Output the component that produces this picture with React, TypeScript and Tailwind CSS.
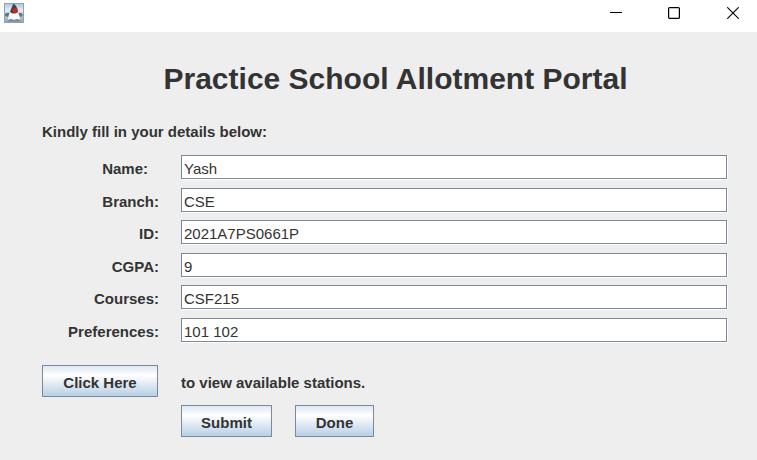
const fields = [
  { id: 'name', label: 'Name:', value: 'Yash', inset: 'pr-[11px]' },
  { id: 'branch', label: 'Branch:', value: 'CSE', inset: '' },
  { id: 'student-id', label: 'ID:', value: '2021A7PS0661P', inset: '' },
  { id: 'cgpa', label: 'CGPA:', value: '9', inset: '' },
  { id: 'courses', label: 'Courses:', value: 'CSF215', inset: '' },
  { id: 'preferences', label: 'Preferences:', value: '101 102', inset: '' },
];

const buttonStyle =
  'h-8 border border-[#7a8a99] bg-linear-to-b from-[#dde8f3] via-white via-30% to-[#b8cfe5] pt-1 text-center text-[15px] leading-5 font-bold';

function DukeIcon() {
  return (
    <svg width="20" height="20" viewBox="0 0 20 20" aria-hidden="true">
      <defs>
        <linearGradient id="tile" x1="0" y1="0" x2="0" y2="1">
          <stop offset="0" stopColor="#b5c8da" />
          <stop offset="0.35" stopColor="#e3ecf3" />
          <stop offset="1" stopColor="#8fa5ba" />
        </linearGradient>
      </defs>
      <rect width="20" height="20" fill="#8da3b8" />
      <rect x="1" y="1" width="18" height="18" fill="url(#tile)" />
      <path d="M1 11Q3 9 6 10L5 14Q3 14 1 13ZM14 10Q18 9 19 12L17 14L14 13Z" fill="#6b747d" />
      <path d="M6 9Q10 12 14 9Q16 13 16 17L13 16L10 17L7 16L4 17Q4 13 6 9Z" fill="#f8f8f8" />
      <path d="M4 17L7 16L10 17L13 16L16 17V18.5H4Z" fill="#7d8995" />
      <path d="M9 1Q11 1 12 3Q14 6 14 9Q10 12 6 9Q7 6 8 4Z" fill="#3d444b" />
      <ellipse cx="11" cy="7.5" rx="2.5" ry="2.2" fill="#ec1820" />
    </svg>
  );
}

function TitleBar() {
  return (
    <header className="flex h-8 items-start justify-between bg-white pl-1">
      <div className="pt-[3px]">
        <DukeIcon />
      </div>
      <div className="flex text-black">
        <button type="button" aria-label="Minimize" className="flex h-[26px] w-[58px] items-center justify-center">
          <svg width="12" height="12" viewBox="0 0 12 12" fill="none" stroke="currentColor">
            <path d="M0 5.5H12" />
          </svg>
        </button>
        <button type="button" aria-label="Maximize" className="flex h-[26px] w-[58px] items-center justify-center">
          <svg width="12" height="12" viewBox="0 0 12 12" fill="none" stroke="currentColor" strokeWidth="1.2">
            <rect x="0.6" y="0.6" width="10.8" height="10.8" rx="1" />
          </svg>
        </button>
        <button type="button" aria-label="Close" className="flex h-[26px] w-[54px] items-center justify-center pl-1.5">
          <svg width="12" height="12" viewBox="0 0 12 12" fill="none" stroke="currentColor" strokeWidth="1.1">
            <path d="M0.3 0.3L11.7 11.7M11.7 0.3L0.3 11.7" />
          </svg>
        </button>
      </div>
    </header>
  );
}

export default function App() {
  return (
    <div className="min-h-screen bg-[#eeeeee] font-['Liberation_Sans',Arial,sans-serif] text-[#333333]">
      <TitleBar />
      <main className="pr-[30px] pl-[42px] pt-6">
        <h1 className="pt-0.5 pl-[22px] text-center text-[30px] leading-[42px] font-bold">
          Practice School Allotment Portal
        </h1>
        <form onSubmit={(e) => e.preventDefault()}>
          <p className="mt-[22px] text-[15px] leading-5 font-bold">Kindly fill in your details below:</p>
          <div className="mt-[13px]">
            {fields.map((f) => (
              <div key={f.id} className="mb-[9px] flex even:mb-2">
                <label
                  htmlFor={f.id}
                  className={`w-[117px] shrink-0 pt-1 text-right text-[15px] leading-5 font-bold ${f.inset}`}
                >
                  {f.label}
                </label>
                <input
                  id={f.id}
                  type="text"
                  defaultValue={f.value}
                  className="ml-[22px] h-6 min-w-0 flex-1 border border-[#7a8a99] bg-white px-0.5 pt-0.5 text-[15px] leading-4 shadow-[1px_1px_0_#ffffff] outline-none"
                />
              </div>
            ))}
          </div>
          <div className="mt-[23px] flex items-center">
            <button type="button" className={`w-[116px] ${buttonStyle}`}>
              Click Here
            </button>
            <span className="ml-[23px] pt-1 text-[15px] leading-5 font-bold">to view available stations.</span>
          </div>
          <div className="mt-2 flex gap-[23px] pl-[139px]">
            <button type="submit" className={`w-[91px] ${buttonStyle}`}>
              Submit
            </button>
            <button type="button" className={`w-[79px] ${buttonStyle}`}>
              Done
            </button>
          </div>
        </form>
      </main>
    </div>
  );
}
